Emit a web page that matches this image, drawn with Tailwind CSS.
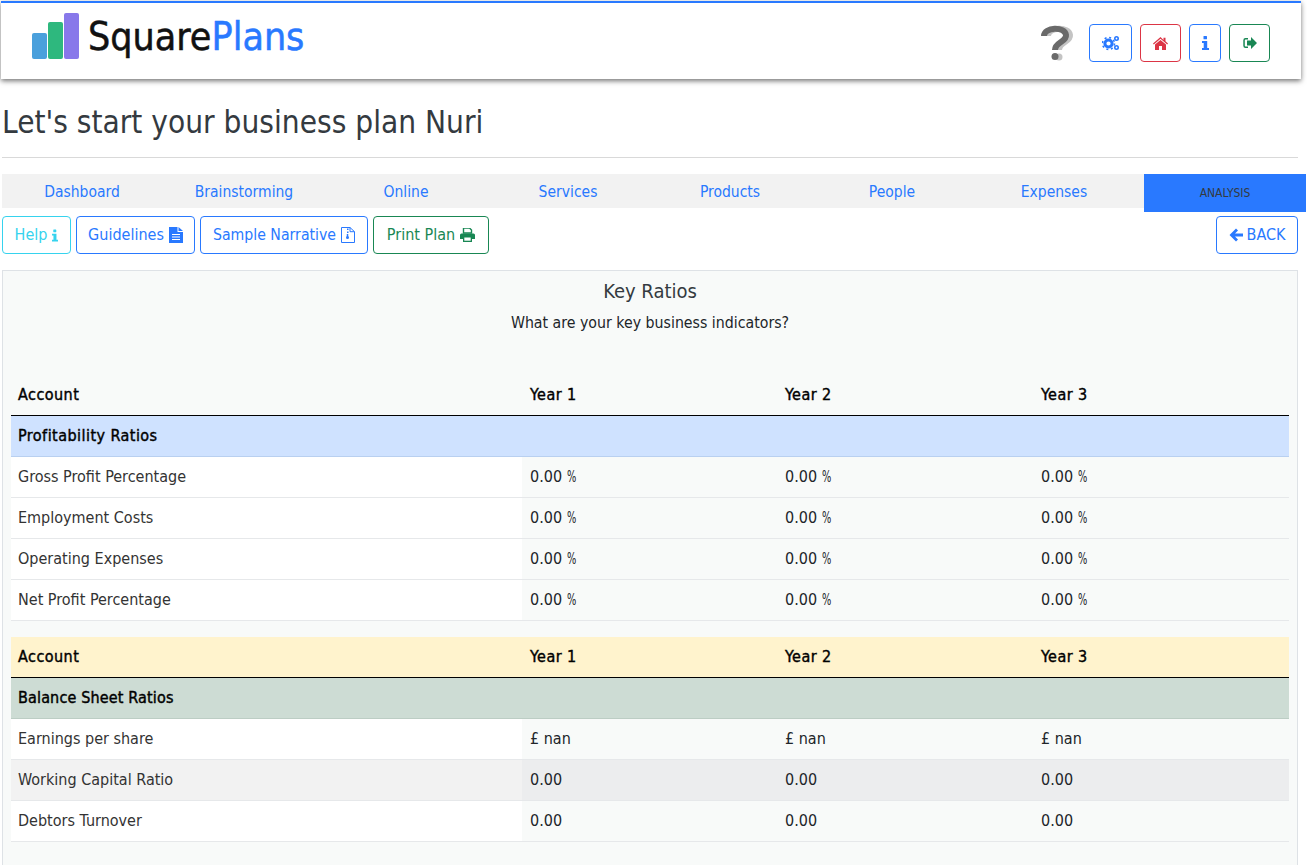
<!DOCTYPE html>
<html lang="en">
<head>
    <meta charset="UTF-8">
    <meta name="viewport" content="width=device-width, initial-scale=1.0">
    <title>SquarePlans - Key Ratios</title>
    <script src="https://cdn.jsdelivr.net/npm/@tailwindcss/browser@4"></script>
</head>
<body class="bg-white font-['DejaVu_Sans_Condensed','DejaVu_Sans',sans-serif] text-[16px] text-[#212529] overflow-hidden h-[865px]">

    <!-- Top bar -->
    <header class="mt-px ml-px w-[1300px] h-[78px] border-t-2 border-[#2979ff] bg-white shadow-[0_2px_5px_rgba(0,0,0,0.55)] flex items-start justify-between">
        <div class="flex items-start pl-[31px] pt-[10px]">
            <svg width="48" height="48" viewBox="0 0 48 48" class="shrink-0">
                <rect x="0" y="20" width="15" height="26" rx="2" fill="#4aa0dc"/>
                <rect x="16" y="9" width="15" height="37" rx="2" fill="#2eb87e"/>
                <rect x="32" y="0" width="15" height="46" rx="2" fill="#8878ea"/>
            </svg>
            <div class="ml-[8px] text-[39px] leading-[48px] [-webkit-text-stroke:0.5px] text-[#111]">Square<span class="text-[#2979ff]">Plans</span></div>
        </div>
        <div class="flex items-center gap-2 pt-[21px] pr-[31px]">
            <svg width="34" height="36" viewBox="0 0 34 36" class="mr-[7px]" fill="none" stroke-linecap="butt">
                <path d="M8 11C8 2 29 1 30 10c.8 7-11 7-11 15" stroke="#c4c4c4" stroke-width="6"/>
                <circle cx="19" cy="32" r="3.500" fill="#c4c4c4"/>
                <path d="M4 11C4 2 25 1 26 10c.8 7-11 7-11 15" stroke="#6a6a6a" stroke-width="6"/>
                <circle cx="15" cy="31.500" r="3.500" fill="#6a6a6a"/>
            </svg>
            <a class="w-[43px] h-[38px] border border-[#2979ff] rounded-[4px] flex items-center justify-center">
                <svg width="18" height="16" viewBox="0 0 18 16" fill="#2979ff"><circle cx="6.500" cy="8.500" r="3.600" fill="none" stroke="#2979ff" stroke-width="3"/><circle cx="6.500" cy="8.500" r="6" fill="none" stroke="#2979ff" stroke-width="1.600" stroke-dasharray="2 2.700"/><circle cx="14.500" cy="3.500" r="1.700" fill="none" stroke="#2979ff" stroke-width="1.600"/><circle cx="14.500" cy="12.500" r="1.700" fill="none" stroke="#2979ff" stroke-width="1.600"/></svg>
            </a>
            <a class="w-[41px] h-[38px] border border-[#dc3545] rounded-[4px] flex items-center justify-center">
                <svg width="15" height="13" viewBox="0 0 15 13" fill="#dc3545"><path d="M7.500 0 0 6.400l.8 1L7.500 1.800l6.700 5.600.8-1-2.500-2.100V.8h-2v2.100z"/><path d="M7.500 3 2 7.600V13h4V9h3v4h4V7.600z"/></svg>
            </a>
            <a class="w-[32px] h-[38px] border border-[#2979ff] rounded-[4px] flex items-center justify-center">
                <svg width="7" height="14" viewBox="0 0 7 14" fill="#2979ff"><rect x="1.500" y="0" width="3.500" height="3.200" rx=".5"/><path d="M0 5h5.200v7H7v2H0v-2h1.700V7H0z"/></svg>
            </a>
            <a class="w-[41px] h-[38px] border border-[#198754] rounded-[4px] flex items-center justify-center">
                <svg width="14" height="12" viewBox="0 0 14 12" fill="#198754"><path d="M5 2.500H2.500a.7.7 0 0 0-.7.7v5.600a.7.7 0 0 0 .7.7H5V11H2.500A2.200 2.200 0 0 1 .3 8.800V3.200A2.200 2.200 0 0 1 2.500 1H5z"/><path d="M8 0l6 6-6 6V8.500H4v-5h4z"/></svg>
            </a>
        </div>
    </header>

    <h1 class="ml-[2px] mt-[23px] text-[31.300px] leading-[40px] text-[#343a40]">Let's start your business plan Nuri</h1>
    <hr class="ml-[2px] mt-[15px] w-[1296px] border-t border-[#d9d9d9]">

    <!-- Section tabs -->
    <nav class="ml-[2px] mt-4 flex items-start">
        <div class="w-[1142px] h-[34px] bg-[#f2f2f2] flex text-[15.500px] text-[#2979ff]">
            <a class="-ml-px w-[162px] text-center leading-[36px]">Dashboard</a>
            <a class="w-[162px] text-center leading-[36px]">Brainstorming</a>
            <a class="w-[162px] text-center leading-[36px]">Online</a>
            <a class="w-[162px] text-center leading-[36px]">Services</a>
            <a class="w-[162px] text-center leading-[36px]">Products</a>
            <a class="w-[162px] text-center leading-[36px]">People</a>
            <a class="w-[162px] text-center leading-[36px]">Expenses</a>
        </div>
        <a class="w-[162px] h-[38px] bg-[#2979ff] text-center text-[12px] leading-[38px] text-[#343a40]">ANALYSIS</a>
    </nav>

    <!-- Actions -->
    <div class="ml-[2px] mt-[4px] w-[1296px] flex items-center gap-[5px]">
        <a class="w-[69px] h-[38px] border border-[#36d3ee] rounded-[4px] text-[#36d3ee] flex items-center justify-center gap-[5px]">Help
            <svg width="6" height="13" viewBox="0 0 7 14" fill="#36d3ee"><rect x="1.500" y="0" width="3.500" height="3.200" rx=".5"/><path d="M0 5h5.200v7H7v2H0v-2h1.700V7H0z"/></svg>
        </a>
        <a class="w-[119px] h-[38px] border border-[#2979ff] rounded-[4px] text-[#2979ff] flex items-center justify-center gap-[5px]">Guidelines
            <svg width="14" height="16" viewBox="0 0 14 16" fill="#2979ff"><path d="M0 0h8.500v5H14v11H0z"/><path d="M9.500 0 14 4H9.500z"/><path d="M3 7.500h8M3 10h8M3 12.500h8" stroke="#fff" stroke-width="1"/></svg>
        </a>
        <a class="w-[168px] h-[38px] border border-[#2979ff] rounded-[4px] text-[15.700px] text-[#2979ff] flex items-center justify-center gap-[5px]">Sample Narrative
            <svg width="14" height="16" viewBox="0 0 14 16" fill="none" stroke="#2979ff"><path d="M.5.500h8.500l4.500 4.200V15.500H.5z"/><path d="M9 .5v4.200h4.500"/><path d="M6 1.500h1.500v1.500H6zM6 4.500h1.500V6H6z" fill="#2979ff" stroke="none"/><circle cx="6.500" cy="10.500" r="1.500" fill="#2979ff" stroke="none"/><path d="M6.500 7v3" stroke-width="1.500"/></svg>
        </a>
        <a class="w-[116px] h-[38px] border border-[#198754] rounded-[4px] text-[#198754] flex items-center justify-center gap-[5px]">Print Plan
            <svg width="15" height="14" viewBox="0 0 15 14" fill="#198754"><path d="M3.500 0h6l2 2v3h-8z" fill="none" stroke="#198754" stroke-width="1.400"/><path d="M1.500 5.500h12a1.500 1.500 0 0 1 1.500 1.500v4h-3v3H3v-3H0V7a1.500 1.500 0 0 1 1.500-1.500z"/><rect x="4.300" y="9.500" width="6.400" height="3.200" fill="#fff"/></svg>
        </a>
        <a class="ml-auto w-[82px] h-[38px] border border-[#2979ff] rounded-[4px] text-[#2979ff] flex items-center justify-center gap-[4px]">
            <svg width="14" height="14" viewBox="0 0 14 14" fill="#2979ff"><path d="M7 .5 9 2.500 6 5.500h8v3H6l3 3L7 13.500.5 7z"/></svg>BACK
        </a>
    </div>

    <!-- Key ratios card -->
    <section class="ml-[2px] mt-4 w-[1296px] h-[620px] border border-[#dee2e6] bg-[#f8faf9] px-[8px]">
        <h2 class="mt-[7px] text-center text-[20px] leading-[26px] text-[#343a40]">Key Ratios</h2>
        <p class="mt-[7px] text-center text-[15.750px] leading-[24px]">What are your key business indicators?</p>

        <table class="mt-[39px] w-[1278px] table-fixed border-collapse">
            <colgroup><col class="w-[511px]"><col class="w-[255px]"><col class="w-[256px]"><col class="w-[256px]"></colgroup>
            <thead>
                <tr class="h-[41px] border-b border-black text-left tracking-[0.45px] [-webkit-text-stroke:0.4px] text-black">
                    <th class="pl-[7px] pt-[2px] font-normal">Account</th><th class="px-2 pt-[2px] font-normal">Year 1</th><th class="px-2 pt-[2px] font-normal">Year 2</th><th class="px-2 pt-[2px] font-normal">Year 3</th>
                </tr>
            </thead>
            <tbody>
                <tr class="h-[41px] bg-[#cfe2ff] border-b border-[#b9d0f0]"><td colspan="4" class="pl-[7px] tracking-[0.45px] [-webkit-text-stroke:0.4px] text-black">Profitability Ratios</td></tr>
                <tr class="h-[41px] border-b border-[#e6e8ea]"><td class="pl-[7px] bg-white text-[#333]">Gross Profit Percentage</td><td class="px-2">0.00 <span class="inline-block origin-left scale-x-[0.68]">%</span></td><td class="px-2">0.00 <span class="inline-block origin-left scale-x-[0.68]">%</span></td><td class="px-2">0.00 <span class="inline-block origin-left scale-x-[0.68]">%</span></td></tr>
                <tr class="h-[41px] border-b border-[#e6e8ea]"><td class="pl-[7px] bg-white text-[#333]">Employment Costs</td><td class="px-2">0.00 <span class="inline-block origin-left scale-x-[0.68]">%</span></td><td class="px-2">0.00 <span class="inline-block origin-left scale-x-[0.68]">%</span></td><td class="px-2">0.00 <span class="inline-block origin-left scale-x-[0.68]">%</span></td></tr>
                <tr class="h-[41px] border-b border-[#e6e8ea]"><td class="pl-[7px] bg-white text-[#333]">Operating Expenses</td><td class="px-2">0.00 <span class="inline-block origin-left scale-x-[0.68]">%</span></td><td class="px-2">0.00 <span class="inline-block origin-left scale-x-[0.68]">%</span></td><td class="px-2">0.00 <span class="inline-block origin-left scale-x-[0.68]">%</span></td></tr>
                <tr class="h-[41px] border-b border-[#e6e8ea]"><td class="pl-[7px] bg-white text-[#333]">Net Profit Percentage</td><td class="px-2">0.00 <span class="inline-block origin-left scale-x-[0.68]">%</span></td><td class="px-2">0.00 <span class="inline-block origin-left scale-x-[0.68]">%</span></td><td class="px-2">0.00 <span class="inline-block origin-left scale-x-[0.68]">%</span></td></tr>
            </tbody>
        </table>

        <table class="mt-[16px] w-[1278px] table-fixed border-collapse">
            <colgroup><col class="w-[511px]"><col class="w-[255px]"><col class="w-[256px]"><col class="w-[256px]"></colgroup>
            <thead>
                <tr class="h-[41px] bg-[#fff3cd] border-b border-black text-left tracking-[0.45px] [-webkit-text-stroke:0.4px] text-black">
                    <th class="pl-[7px] font-normal">Account</th><th class="px-2 font-normal">Year 1</th><th class="px-2 font-normal">Year 2</th><th class="px-2 font-normal">Year 3</th>
                </tr>
            </thead>
            <tbody>
                <tr class="h-[41px] bg-[#cddcd4] border-b border-[#bccdc4]"><td colspan="4" class="pl-[7px] tracking-[0.15px] [-webkit-text-stroke:0.4px] text-black">Balance Sheet Ratios</td></tr>
                <tr class="h-[41px] border-b border-[#e6e8ea]"><td class="pl-[7px] bg-white text-[#333]">Earnings per share</td><td class="px-2">£ nan</td><td class="px-2">£ nan</td><td class="px-2">£ nan</td></tr>
                <tr class="h-[41px] border-b border-[#e6e8ea] bg-[#ecedee]"><td class="pl-[7px] bg-[#f2f2f2] text-[#333]">Working Capital Ratio</td><td class="px-2">0.00</td><td class="px-2">0.00</td><td class="px-2">0.00</td></tr>
                <tr class="h-[41px] border-b border-[#e6e8ea]"><td class="pl-[7px] bg-white text-[#333]">Debtors Turnover</td><td class="px-2">0.00</td><td class="px-2">0.00</td><td class="px-2">0.00</td></tr>
            </tbody>
        </table>
    </section>
</body>
</html>
